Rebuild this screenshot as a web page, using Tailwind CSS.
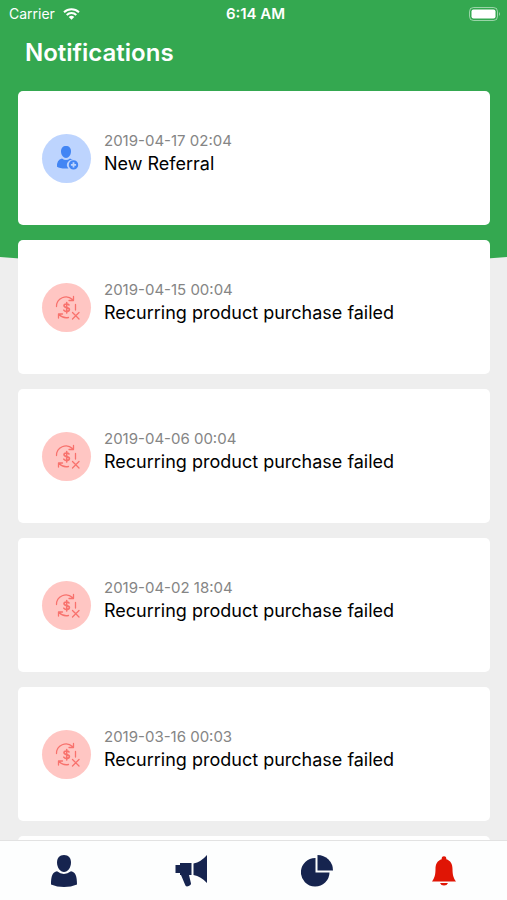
<!DOCTYPE html>
<html lang="en">
<head>
<meta charset="utf-8">
<meta name="viewport" content="width=device-width, initial-scale=1">
<title>Notifications</title>
<script src="https://cdn.jsdelivr.net/npm/@tailwindcss/browser@4"></script>
</head>
<body class="bg-[#eeeeee] font-['Inter','Liberation_Sans',sans-serif]">
<svg class="hidden" aria-hidden="true">
  <symbol id="recurring-failed" viewBox="0 0 26 26">
    <g fill="none" stroke="currentColor" stroke-width="1.3" stroke-linecap="round" stroke-linejoin="round">
      <path d="M2.500 12.500A9.500 9.500 0 0 1 18.500 5.500M19.500 2.500V6.500H15"/>
      <path d="M4.500 24V20H8.500M5 20.500A10 10 0 0 0 14.500 23.500"/>
      <path d="M21.500 10.500V16M18.500 18.500L25 25M25 18.500L18.500 25"/>
      <path stroke-width="1.600" d="M15 11C14 9.500 10 9.500 10 11.800C10 14.200 15.400 13 15.400 15.600C15.400 18 10.800 18 9.800 16.200M12.700 8.500V19"/>
    </g>
  </symbol>
</svg>
<div class="relative isolate flex h-screen flex-col overflow-hidden">
  <div class="absolute inset-x-0 top-0 -z-10 h-[268px] overflow-hidden" aria-hidden="true">
    <svg class="h-full w-full" viewBox="0 0 507 268" preserveAspectRatio="none"><path fill="#34a850" d="M0 0H507V257Q253.500 279 0 257Z"/></svg>
  </div>

  <div class="grid h-7 shrink-0 grid-cols-3 items-center px-[6px] text-white">
    <div class="flex items-center gap-2 pl-[3px] text-sm">
      <span>Carrier</span>
      <svg class="h-3 w-[17px]" viewBox="0 0 17 12" role="img" aria-label="Wi-Fi">
        <g fill="none" stroke="currentColor" stroke-width="2"><path d="M1 4.200A11 11 0 0 1 16 4.200"/><path d="M3.700 7A7 7 0 0 1 13.300 7"/></g>
        <path fill="currentColor" d="M8.500 11.800L5.700 9A4 4 0 0 1 11.300 9Z"/>
      </svg>
    </div>
    <div class="pl-1 text-center text-[15px] font-semibold">6:14 AM</div>
    <svg class="h-[14px] w-8 justify-self-end" viewBox="0 0 32 14" role="img" aria-label="Battery full">
      <rect x=".5" y=".5" width="28" height="13" rx="4" fill="none" stroke="#fff" stroke-opacity=".5"/>
      <rect x="2.500" y="2.500" width="24" height="9" rx="2" fill="#fff"/>
      <path d="M30 5Q32 7 30 9Z" fill="#fff" fill-opacity=".5"/>
    </svg>
  </div>

  <header class="shrink-0 px-[25px] pt-[9px] pb-[22px]">
    <h1 class="text-2xl leading-8 font-semibold text-white">Notifications</h1>
  </header>

  <main class="min-h-0 flex-1 overflow-hidden pr-[17px] pl-[18px]">
    <ul class="flex flex-col gap-[15px]">
      <li class="flex h-[134px] shrink-0 items-center gap-[13px] rounded-[5px] bg-white px-6">
        <span class="flex size-[49px] shrink-0 items-center justify-center rounded-full bg-[#bdd4fe] text-[#4285f4]">
          <svg class="size-6" viewBox="0 0 24 24" fill="currentColor" aria-hidden="true">
            <path d="M11 0C14.200 0 16 2 16 5.500C16 9 13.700 12 11 12S6 9 6 5.500C6 2 7.800 0 11 0Z"/>
            <path d="M7 12.500Q11 15.500 15 12.500L18 14A5 5 0 0 0 13.500 22.500Q5 23 2 20.800Q1.500 14 7 12.500Z"/>
            <path fill-rule="evenodd" d="M18.500 14.200a4.700 4.700 0 1 0 0 9.400a4.700 4.700 0 0 0 0-9.400ZM17.600 16.300H19.400V18H21.100V19.800H19.400V21.500H17.600V19.800H15.900V18H17.600Z"/>
          </svg>
        </span>
        <div class="min-w-0 pb-2">
          <time class="block text-[15px] leading-5 text-[#858585]">2019-04-17 02:04</time>
          <h2 class="text-lg leading-[26px] text-black">New Referral</h2>
        </div>
      </li>
      <li class="flex h-[134px] shrink-0 items-center gap-[13px] rounded-[5px] bg-white px-6">
        <span class="flex size-[49px] shrink-0 items-center justify-center rounded-full bg-[#ffc6c3] text-[#f8726d]"><svg class="size-[26px]" aria-hidden="true"><use href="#recurring-failed"/></svg></span>
        <div class="min-w-0 pb-2">
          <time class="block text-[15px] leading-5 text-[#858585]">2019-04-15 00:04</time>
          <h2 class="text-lg leading-[26px] text-black">Recurring product purchase failed</h2>
        </div>
      </li>
      <li class="flex h-[134px] shrink-0 items-center gap-[13px] rounded-[5px] bg-white px-6">
        <span class="flex size-[49px] shrink-0 items-center justify-center rounded-full bg-[#ffc6c3] text-[#f8726d]"><svg class="size-[26px]" aria-hidden="true"><use href="#recurring-failed"/></svg></span>
        <div class="min-w-0 pb-2">
          <time class="block text-[15px] leading-5 text-[#858585]">2019-04-06 00:04</time>
          <h2 class="text-lg leading-[26px] text-black">Recurring product purchase failed</h2>
        </div>
      </li>
      <li class="flex h-[134px] shrink-0 items-center gap-[13px] rounded-[5px] bg-white px-6">
        <span class="flex size-[49px] shrink-0 items-center justify-center rounded-full bg-[#ffc6c3] text-[#f8726d]"><svg class="size-[26px]" aria-hidden="true"><use href="#recurring-failed"/></svg></span>
        <div class="min-w-0 pb-2">
          <time class="block text-[15px] leading-5 text-[#858585]">2019-04-02 18:04</time>
          <h2 class="text-lg leading-[26px] text-black">Recurring product purchase failed</h2>
        </div>
      </li>
      <li class="flex h-[134px] shrink-0 items-center gap-[13px] rounded-[5px] bg-white px-6">
        <span class="flex size-[49px] shrink-0 items-center justify-center rounded-full bg-[#ffc6c3] text-[#f8726d]"><svg class="size-[26px]" aria-hidden="true"><use href="#recurring-failed"/></svg></span>
        <div class="min-w-0 pb-2">
          <time class="block text-[15px] leading-5 text-[#858585]">2019-03-16 00:03</time>
          <h2 class="text-lg leading-[26px] text-black">Recurring product purchase failed</h2>
        </div>
      </li>
      <li class="h-[134px] shrink-0 rounded-[5px] bg-white" aria-hidden="true"></li>
    </ul>
  </main>

  <nav class="grid h-[60px] shrink-0 grid-cols-4 border-t border-[#e2e2e2] bg-[#fdfefe] pl-px text-[#16244f]" aria-label="Main">
    <a href="#profile" class="flex items-center justify-center" aria-label="Profile">
      <svg class="size-8" viewBox="0 0 32 32" fill="currentColor" aria-hidden="true">
        <path d="M16 0C20.500 0 23 3 23 7.500C23 12.500 19.800 17 16 17S9 12.500 9 7.500C9 3 11.500 0 16 0Z"/>
        <path d="M9 16.300Q15.800 21.500 23 16.300C27.500 17 29 21 29 29.500Q23 32 16 32T3 29.500C3 21 4.500 17 9 16.300Z"/>
      </svg>
    </a>
    <a href="#campaigns" class="flex items-center justify-center" aria-label="Campaigns">
      <svg class="size-8" viewBox="0 0 32 32" fill="currentColor" aria-hidden="true">
        <path d="M32 0V28Q26 21.500 18.500 20V8.500Q26 7 32 0Z"/>
        <path d="M5 8H16.500V20H14L16 28.500Q16 30.500 12 31.500Q10.500 31.500 10 29.500L6 20H5V18H.5V10H5Z"/>
      </svg>
    </a>
    <a href="#reports" class="flex items-center justify-center" aria-label="Reports">
      <svg class="size-8" viewBox="0 0 32 32" fill="currentColor" aria-hidden="true">
        <path d="M16.500 0A15.500 15.500 0 0 1 32 15.500H16.500Z"/>
        <path d="M14.500 3V17.500H28.500A14.300 14.300 0 1 1 14.500 3Z"/>
      </svg>
    </a>
    <a href="#notifications" class="flex items-center justify-center text-[#e01505]" aria-label="Notifications" aria-current="page">
      <svg class="size-8" viewBox="0 0 32 32" fill="currentColor" aria-hidden="true">
        <path d="M16 1.300C17.700 1.300 18.500 2.500 18.300 4.200C22.500 5.500 24.500 9 24.500 14C24.500 20 25.500 23 28 26.500H4C6.500 23 7.500 20 7.500 14C7.500 9 9.500 5.500 13.700 4.200C13.500 2.500 14.300 1.300 16 1.300Z"/>
        <path d="M12 28H20Q19 30.500 16 30.500T12 28Z"/>
      </svg>
    </a>
  </nav>
</div>
</body>
</html>
